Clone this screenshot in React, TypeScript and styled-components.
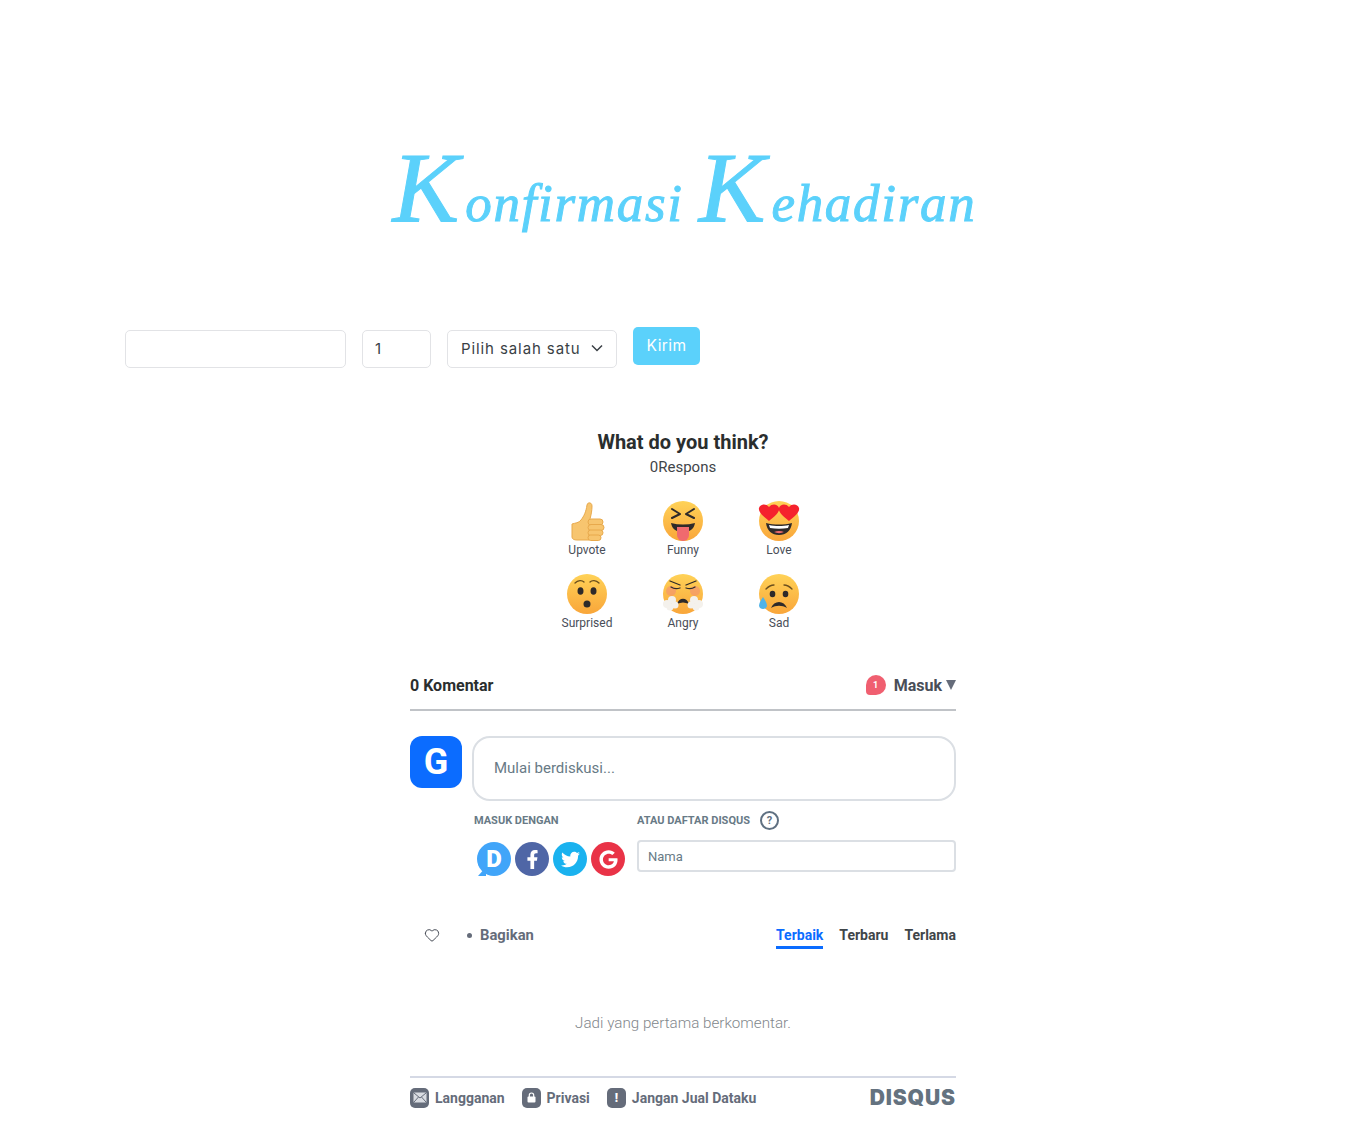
import React from 'react'
import styled, { createGlobalStyle } from 'styled-components'
import { Heart } from 'lucide-react'
import { FaFacebookF, FaTwitter, FaGoogle } from 'react-icons/fa'

const GlobalStyle = createGlobalStyle`
  html, body {
    margin: 0;
    padding: 0;
    background: #fff;
  }
  * {
    box-sizing: border-box;
  }
`

const Page = styled.main`
  width: 1366px;
  height: 1125px;
  overflow: hidden;
  font-family: Roboto, "Liberation Sans", sans-serif;
`

const Title = styled.h1`
  margin: 0;
  padding: 138px 0 0 3px;
  height: 327px;
  text-align: center;
  font-family: "Liberation Serif", serif;
  font-style: italic;
  font-weight: 400;
  font-size: 53px;
  line-height: 100px;
  letter-spacing: 1.7px;
  color: #5bd1fb;
  -webkit-text-stroke: 1px #5bd1fb;
  white-space: nowrap;
`

const Capital = styled.span`
  font-size: 100px;
  letter-spacing: 6px;
`

const FormRow = styled.form`
  display: flex;
  align-items: flex-start;
  gap: 16px;
  padding-left: 125px;
  height: 101px;
`

const Field = styled.div<{ $w: number }>`
  display: flex;
  align-items: center;
  justify-content: space-between;
  width: ${(p) => p.$w}px;
  height: 38px;
  margin-top: 3px;
  padding: 0 13px 2px 12px;
  border: 1px solid #e2e3e6;
  border-radius: 5px;
  font-family: Inter, sans-serif;
  font-size: 15px;
  color: #3a3f45;
`

const SelectText = styled.span`
  margin-left: 1px;
  letter-spacing: 0.9px;
`

const SendButton = styled.button`
  width: 67px;
  height: 38px;
  padding: 0 0 2px;
  border: 0;
  border-radius: 5px;
  background: #5bd1fb;
  color: #fff;
  font-family: Inter, sans-serif;
  font-size: 15.5px;
  letter-spacing: 0.4px;
`

const Thread = styled.section`
  width: 546px;
  margin: 0 auto;
`

const Heading = styled.h2`
  margin: 0;
  text-align: center;
  font-size: 20px;
  line-height: 28px;
  font-weight: 700;
  color: #2a2e2e;
`

const Responses = styled.div`
  margin-top: 1px;
  text-align: center;
  font-size: 15px;
  line-height: 20px;
  color: #3f4549;
`

const ReactionGrid = styled.div`
  display: grid;
  grid-template-columns: repeat(3, 96px);
  grid-auto-rows: 73px;
  justify-content: center;
  margin-top: 24px;
  height: 173px;
`

const Reaction = styled.div`
  display: flex;
  flex-direction: column;
  align-items: center;
  font-size: 12px;
  line-height: 18px;
  color: #494e58;
  svg {
    display: block;
    overflow: visible;
  }
`

const ThreadHead = styled.div`
  display: flex;
  align-items: center;
  justify-content: space-between;
  height: 37px;
  border-bottom: 2px solid #c0c3c7;
  padding-bottom: 13px;
`

const Count = styled.span`
  font-size: 16px;
  font-weight: 700;
  color: #2a2e2e;
`

const Login = styled.span`
  display: flex;
  align-items: center;
  font-size: 16px;
  font-weight: 700;
  color: #494e58;
`

const Badge = styled.span`
  display: flex;
  align-items: center;
  justify-content: center;
  width: 20px;
  height: 20px;
  margin-right: 8px;
  border-radius: 50% 50% 50% 4px;
  background: #f05f70;
  color: #fff;
  font-size: 9px;
  font-weight: 700;
`

const Caret = styled.span`
  width: 0;
  height: 0;
  margin-left: 4px;
  border-left: 5px solid transparent;
  border-right: 5px solid transparent;
  border-top: 10px solid #656c7a;
`

const Composer = styled.div`
  display: flex;
  gap: 10px;
  margin-top: 25px;
`

const Avatar = styled.div`
  display: flex;
  align-items: center;
  justify-content: center;
  flex: none;
  width: 52px;
  height: 52px;
  border-radius: 12px;
  background: #0b6cff;
  color: #fff;
  font-size: 36px;
  font-weight: 700;
`

const ComposerBody = styled.div`
  flex: 1;
`

const TextBox = styled.div`
  display: flex;
  align-items: center;
  height: 65px;
  padding: 0 20px 1px;
  border: 2px solid #dbdfe4;
  border-radius: 18px;
  font-size: 15px;
  color: #687a86;
`

const AuthRow = styled.div`
  display: flex;
  margin-top: 10px;
`

const AuthColumn = styled.div<{ $w?: number }>`
  width: ${(p) => (p.$w ? `${p.$w}px` : 'auto')};
  flex: ${(p) => (p.$w ? 'none' : 1)};
`

const AuthLabel = styled.div`
  display: flex;
  align-items: center;
  height: 18px;
  padding-left: 2px;
  font-size: 11px;
  font-weight: 700;
  color: #687a86;
`

const GuestLabel = styled(AuthLabel)`
  padding-left: 0;
`

const Help = styled.span`
  display: flex;
  align-items: center;
  justify-content: center;
  width: 19px;
  height: 19px;
  margin-left: 10px;
  border: 2px solid #5f7081;
  border-radius: 50%;
  font-size: 11px;
  font-weight: 700;
  color: #5f7081;
`

const SocialList = styled.div`
  display: flex;
  gap: 4px;
  margin-top: 13px;
  padding-left: 5px;
`

const Social = styled.span<{ $bg: string }>`
  position: relative;
  display: flex;
  align-items: center;
  justify-content: center;
  width: 34px;
  height: 34px;
  border-radius: 50%;
  background: ${(p) => p.$bg};
  color: #fff;
  font-size: 19px;
`

const DisqusMark = styled.span`
  font-size: 24px;
  font-weight: 900;
  line-height: 1;
`

const BubbleTail = styled.span`
  position: absolute;
  left: -1px;
  bottom: 0;
  width: 0;
  height: 0;
  border-top: 9px solid transparent;
  border-left: 2px solid transparent;
  border-right: 8px solid #41a5f9;
`

const NameInput = styled.div`
  display: flex;
  align-items: center;
  height: 32px;
  margin-top: 11px;
  padding: 0 9px;
  border: 2px solid #dbdfe4;
  border-radius: 4px;
  font-size: 13px;
  color: #687a86;
`

const Toolbar = styled.div`
  display: flex;
  align-items: center;
  justify-content: space-between;
  height: 34px;
  margin-top: 44px;
`

const ToolLeft = styled.div`
  display: flex;
  align-items: center;
  padding: 0 0 4px 14px;
  color: #494e58;
`

const Share = styled.span`
  display: flex;
  align-items: center;
  margin-left: 27px;
  font-size: 14.8px;
  font-weight: 700;
  color: #656c7a;
  &::before {
    content: '';
    width: 5px;
    height: 5px;
    margin-right: 8px;
    border-radius: 50%;
    background: #656c7a;
  }
`

const Tabs = styled.div`
  display: flex;
  gap: 16px;
`

const Tab = styled.span<{ $active?: boolean }>`
  padding: 0 0 2px;
  border-bottom: 3px solid ${(p) => (p.$active ? '#0b6cff' : 'transparent')};
  font-size: 14px;
  line-height: 18px;
  font-weight: 700;
  color: ${(p) => (p.$active ? '#0b6cff' : '#3f4549')};
`

const EmptyNote = styled.div`
  margin-top: 59px;
  text-align: center;
  font-size: 15.2px;
  line-height: 20px;
  color: #82878c;
  font-weight: 300;
`

const Footer = styled.footer`
  display: flex;
  align-items: center;
  justify-content: space-between;
  height: 36px;
  margin-top: 43px;
  padding-top: 5px;
  border-top: 2px solid #d5d9e5;
`

const FooterLinks = styled.div`
  display: flex;
  gap: 17px;
`

const FooterLink = styled.span`
  display: flex;
  align-items: center;
  gap: 6px;
  font-size: 14px;
  font-weight: 700;
  color: #656c7a;
`

const FooterIcon = styled.span`
  display: flex;
  align-items: center;
  justify-content: center;
  width: 19px;
  height: 20px;
  border-radius: 5px;
  background: #656c7a;
  color: #fff;
  font-size: 12px;
  font-weight: 900;
`

const Logo = styled.span`
  font-family: Inter, sans-serif;
  font-size: 21px;
  font-weight: 900;
  letter-spacing: 0.9px;
  color: #64727f;
`

const FaceBase = ({ id, children }: { id: string; children: React.ReactNode }) => (
  <svg width="40" height="40" viewBox="0 0 40 40">
    <defs>
      <linearGradient id={id} x1="0" y1="0" x2="0" y2="1">
        <stop offset="0" stopColor="#ffd257" />
        <stop offset="1" stopColor="#f9a63a" />
      </linearGradient>
    </defs>
    <circle cx="20" cy="20" r="20" fill={`url(#${id})`} />
    {children}
  </svg>
)

const ThumbIcon = () => (
  <svg width="40" height="40" viewBox="0 0 40 40">
    <path
      d="M5 23c3-1 7-1 9-4 3-4 5-8 6-15 .4-3 5-3 5 1 0 5-1 9-2 13l-1 21H10c-3 0-5-1-5-3z"
      fill="#f7c56f"
      stroke="#e8a94c"
      strokeWidth="1"
    />
    <rect x="21" y="18" width="15" height="6" rx="3" fill="#f7c56f" stroke="#e8a94c" />
    <rect x="21" y="23.5" width="16" height="6" rx="3" fill="#f7c56f" stroke="#e8a94c" />
    <rect x="21" y="29" width="15" height="5.5" rx="2.7" fill="#f7c56f" stroke="#e8a94c" />
    <rect x="21" y="34" width="13" height="5.5" rx="2.7" fill="#f7c56f" stroke="#e8a94c" />
  </svg>
)

const FunnyIcon = () => (
  <FaceBase id="funny">
    <path d="M9 8l8 5-8 4M31 8l-8 5 8 4" fill="none" stroke="#2e2a2a" strokeWidth="2" strokeLinecap="round" strokeLinejoin="round" />
    <path d="M8 22c8 2 16 2 24 0-1 6-5 9-12 9S9 28 8 22z" fill="#2e2a2a" />
    <path d="M14 26h12v8a6 6 0 0 1-12 0z" fill="#f06a6e" />
  </FaceBase>
)

const LoveIcon = () => (
  <FaceBase id="love">
    <path d="M7 22c8 2 18 2 26 0-1 8-6 12-13 12S8 30 7 22z" fill="#2e2a2a" />
    <path d="M10 24c6 1.400 14 1.400 20 0l-1 3c-6 1-12 1-18 0z" fill="#fff" />
    <path d="M15 31c3-1.500 7-1.500 10 0-3 1.500-7 1.500-10 0z" fill="#f06a6e" />
    <path d="M10 20C4 15-1 11 0 7c1-4 7-5 10-1 3-4 9-3 10 1 1 4-4 8-10 13z" fill="#f5222d" />
    <path d="M30 20c-6-5-11-9-10-13 1-4 7-5 10-1 3-4 9-3 10 1 1 4-4 8-10 13z" fill="#f5222d" />
  </FaceBase>
)

const SurprisedIcon = () => (
  <FaceBase id="surprised">
    <path d="M8 9c3-3 7-3 9-1M32 9c-3-3-7-3-9-1" fill="none" stroke="#6b4f1d" strokeWidth="1.300" strokeLinecap="round" />
    <ellipse cx="13.500" cy="17" rx="3" ry="3.800" fill="#2e2a2a" />
    <ellipse cx="26.500" cy="17" rx="3" ry="3.800" fill="#2e2a2a" />
    <circle cx="20" cy="30" r="3.500" fill="#2e2a2a" />
  </FaceBase>
)

const AngryIcon = () => (
  <FaceBase id="angry">
    <circle cx="8" cy="17" r="5" fill="#f28f74" opacity="0.6" />
    <circle cx="32" cy="17" r="5" fill="#f28f74" opacity="0.6" />
    <path d="M7 7l10 4M33 7l-10 4M8 13c3 2 6 2 9 1M32 13c-3 2-6 2-9 1" fill="none" stroke="#2e2a2a" strokeWidth="1.300" strokeLinecap="round" />
    <path d="M14 30c2-7 10-7 12 0-4-2-8-2-12 0z" fill="#2e2a2a" />
    <g fill="#f4f1ec">
      <circle cx="4" cy="30" r="4" />
      <circle cx="9" cy="26" r="4" />
      <circle cx="12" cy="31" r="3.500" />
      <circle cx="7" cy="33" r="3.500" />
      <circle cx="36" cy="30" r="4" />
      <circle cx="31" cy="26" r="4" />
      <circle cx="28" cy="31" r="3.500" />
      <circle cx="33" cy="33" r="3.500" />
    </g>
  </FaceBase>
)

const SadIcon = () => (
  <FaceBase id="sad">
    <path d="M7 15c2-2 5-4 8-4M33 15c-2-2-5-4-8-4" fill="none" stroke="#6b4f1d" strokeWidth="1.300" strokeLinecap="round" />
    <ellipse cx="13.500" cy="20" rx="2.800" ry="3.300" fill="#2e2a2a" />
    <ellipse cx="26.500" cy="20" rx="2.800" ry="3.300" fill="#2e2a2a" />
    <path d="M12 34c3-8 13-8 16 0-5-3-11-3-16 0z" fill="#2e2a2a" />
    <path d="M4 23c2 3 4 6 4 9a4.200 4.200 0 0 1-8 0c0-3 2-6 4-9z" fill="#4fb3e8" />
  </FaceBase>
)

const MailIcon = () => (
  <svg width="14" height="11" viewBox="0 0 14 11">
    <rect x="0.500" y="0.500" width="13" height="10" rx="1" fill="#d9dce2" />
    <path d="M1 1l6 5 6-5M1 10l4.500-5M13 10L8.500 5" fill="none" stroke="#656c7a" strokeWidth="1" />
  </svg>
)

const LockIcon = () => (
  <svg width="9" height="11" viewBox="0 0 9 11">
    <path d="M2.300 5V3.200a2.200 2.200 0 0 1 4.400 0V5" fill="none" stroke="#fff" strokeWidth="1.200" />
    <rect x="0.500" y="4.500" width="8" height="6" rx="1" fill="#fff" />
  </svg>
)

const reactions = [
  { name: 'Upvote', icon: <ThumbIcon /> },
  { name: 'Funny', icon: <FunnyIcon /> },
  { name: 'Love', icon: <LoveIcon /> },
  { name: 'Surprised', icon: <SurprisedIcon /> },
  { name: 'Angry', icon: <AngryIcon /> },
  { name: 'Sad', icon: <SadIcon /> },
]

const App = () => {
  return (
    <Page>
      <GlobalStyle />
      <Title>
        <Capital>K</Capital>onfirmasi <Capital>K</Capital>ehadiran
      </Title>

      <FormRow>
        <Field $w={221} />
        <Field $w={69}>1</Field>
        <Field $w={170}>
          <SelectText>Pilih salah satu</SelectText>
          <svg width="12" height="8" viewBox="0 0 12 8">
            <path d="M1 1.500l5 5 5-5" fill="none" stroke="#3a3f45" strokeWidth="1.500" />
          </svg>
        </Field>
        <SendButton type="button">Kirim</SendButton>
      </FormRow>

      <Thread>
        <Heading>What do you think?</Heading>
        <Responses>0Respons</Responses>
        <ReactionGrid>
          {reactions.map((r) => (
            <Reaction key={r.name}>
              {r.icon}
              {r.name}
            </Reaction>
          ))}
        </ReactionGrid>

        <ThreadHead>
          <Count>0 Komentar</Count>
          <Login>
            <Badge>1</Badge>
            Masuk
            <Caret />
          </Login>
        </ThreadHead>

        <Composer>
          <Avatar>G</Avatar>
          <ComposerBody>
            <TextBox>Mulai berdiskusi...</TextBox>
            <AuthRow>
              <AuthColumn $w={165}>
                <AuthLabel>MASUK DENGAN</AuthLabel>
                <SocialList>
                  <Social $bg="#41a5f9">
                    <DisqusMark>D</DisqusMark>
                    <BubbleTail />
                  </Social>
                  <Social $bg="#4f66a6"><FaFacebookF /></Social>
                  <Social $bg="#1ab2ef"><FaTwitter /></Social>
                  <Social $bg="#e93347"><FaGoogle /></Social>
                </SocialList>
              </AuthColumn>
              <AuthColumn>
                <GuestLabel>
                  ATAU DAFTAR DISQUS
                  <Help>?</Help>
                </GuestLabel>
                <NameInput>Nama</NameInput>
              </AuthColumn>
            </AuthRow>
          </ComposerBody>
        </Composer>

        <Toolbar>
          <ToolLeft>
            <Heart size={16} strokeWidth={1.5} />
            <Share>Bagikan</Share>
          </ToolLeft>
          <Tabs>
            <Tab $active>Terbaik</Tab>
            <Tab>Terbaru</Tab>
            <Tab>Terlama</Tab>
          </Tabs>
        </Toolbar>

        <EmptyNote>Jadi yang pertama berkomentar.</EmptyNote>

        <Footer>
          <FooterLinks>
            <FooterLink>
              <FooterIcon><MailIcon /></FooterIcon>
              Langganan
            </FooterLink>
            <FooterLink>
              <FooterIcon><LockIcon /></FooterIcon>
              Privasi
            </FooterLink>
            <FooterLink>
              <FooterIcon>!</FooterIcon>
              Jangan Jual Dataku
            </FooterLink>
          </FooterLinks>
          <Logo>DISQUS</Logo>
        </Footer>
      </Thread>
    </Page>
  )
}

export default App
